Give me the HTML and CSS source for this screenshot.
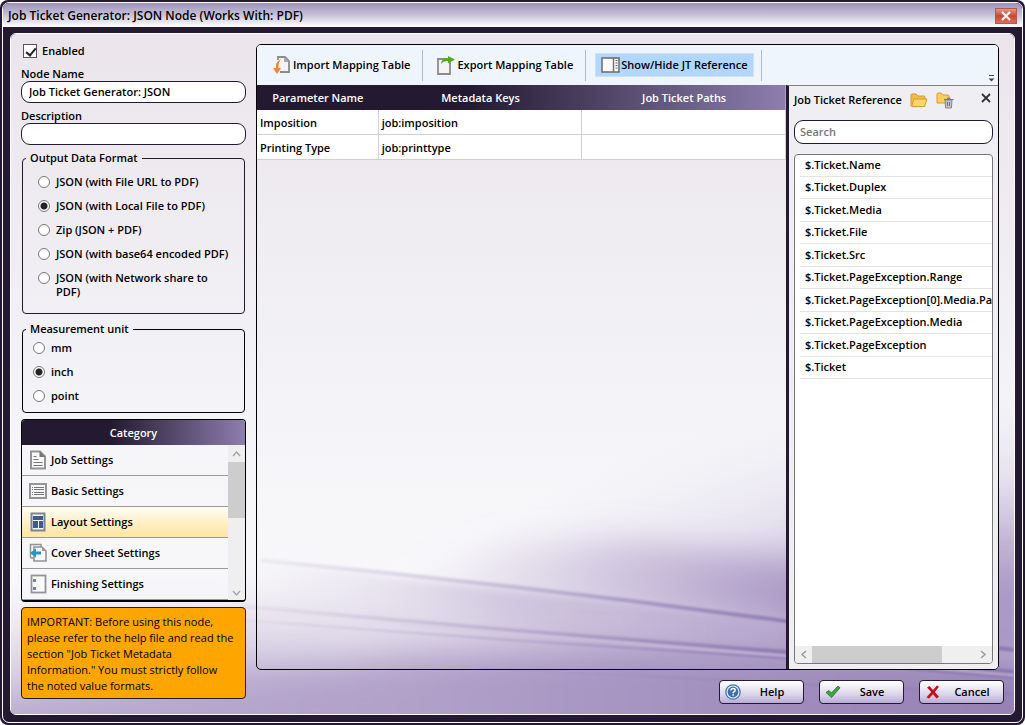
FILE: index.html
```html
<!DOCTYPE html>
<html lang="en">
<head>
<meta charset="utf-8">
<title>Job Ticket Generator: JSON Node (Works With: PDF)</title>
<link rel="stylesheet" href="styles.css">
</head>
<body>
<div class="window">
  <div class="frame">
    <header class="titlebar">
      <h1>Job Ticket Generator: JSON Node (Works With: PDF)</h1>
      <button class="close" type="button" aria-label="Close window"><svg width="10" height="10" viewBox="0 0 10 10"><path d="M1 1l8 8M9 1l-8 8" stroke="#fff" stroke-width="2.2"/></svg></button>
    </header>
    <form class="panel">
      <svg class="backdrop" viewBox="10 33 1004 681" preserveAspectRatio="none" aria-hidden="true">
        <defs>
          <linearGradient id="base" x1="0" y1="0" x2="0" y2="1"><stop offset="0" stop-color="#ebe5eb"/><stop offset=".3" stop-color="#efedf2"/><stop offset=".66" stop-color="#f6f6f9"/><stop offset=".8" stop-color="#f8f8fa"/><stop offset="1" stop-color="#ece8f2"/></linearGradient>
          <linearGradient id="low" gradientUnits="userSpaceOnUse" x1="10" y1="0" x2="1014" y2="0"><stop offset="0" stop-color="#b9abcf"/><stop offset=".4" stop-color="#b1a1c9"/><stop offset=".75" stop-color="#a08dbd"/><stop offset="1" stop-color="#9681b5"/></linearGradient>
          <linearGradient id="wedge" gradientUnits="userSpaceOnUse" x1="380" y1="0" x2="800" y2="0"><stop offset="0" stop-color="#cfc4de" stop-opacity="0"/><stop offset=".55" stop-color="#bfb0d3" stop-opacity=".6"/><stop offset="1" stop-color="#ab9ac5"/></linearGradient>
          <linearGradient id="mid" gradientUnits="userSpaceOnUse" x1="220" y1="0" x2="800" y2="0"><stop offset="0" stop-color="#e5e0ec" stop-opacity="0"/><stop offset=".5" stop-color="#cdc2dc" stop-opacity=".85"/><stop offset="1" stop-color="#b4a5cc"/></linearGradient>
          <linearGradient id="streak" gradientUnits="userSpaceOnUse" x1="250" y1="0" x2="800" y2="0"><stop offset="0" stop-color="#9f8fb9" stop-opacity=".1"/><stop offset=".5" stop-color="#9483b4" stop-opacity=".4"/><stop offset="1" stop-color="#8672ad" stop-opacity=".85"/></linearGradient>
          <radialGradient id="glow" gradientUnits="userSpaceOnUse" cx="0" cy="0" r="1" gradientTransform="translate(1060 620) scale(620 230)"><stop offset="0" stop-color="#9f8cbd"/><stop offset=".35" stop-color="#b3a3cb" stop-opacity=".8"/><stop offset=".65" stop-color="#cabfdc" stop-opacity=".35"/><stop offset="1" stop-color="#e5e0ec" stop-opacity="0"/></radialGradient>
          <radialGradient id="shade" gradientUnits="userSpaceOnUse" cx="0" cy="0" r="1" gradientTransform="translate(200 760) scale(500 190)"><stop offset="0" stop-color="#a998c5"/><stop offset=".45" stop-color="#b9abcf" stop-opacity=".75"/><stop offset="1" stop-color="#e5e0ec" stop-opacity="0"/></radialGradient>
          <filter id="b20" x="-20%" y="-60%" width="140%" height="220%"><feGaussianBlur stdDeviation="24 16"/></filter>
          <filter id="b4" x="-20%" y="-40%" width="140%" height="180%"><feGaussianBlur stdDeviation="4"/></filter>
          <filter id="b1" x="-20%" y="-40%" width="140%" height="180%"><feGaussianBlur stdDeviation="1.300"/></filter>
        </defs>
        <rect x="10" y="33" width="1004" height="681" fill="url(#base)"/>
        <rect x="10" y="33" width="1004" height="681" fill="url(#glow)"/>
        <path d="M380 600L500 546L620 538L786 560L1060 590V680L786 625Z" fill="url(#wedge)" filter="url(#b20)"/>
        <path d="M220 557L786 622L1060 652V740H220Z" fill="url(#mid)" filter="url(#b4)"/>
        <rect x="10" y="500" width="1004" height="214" fill="url(#shade)"/>
        <path d="M-80 712L120 700L256 680L420 656L600 650L786 658L1060 670V800H-80Z" fill="url(#low)" filter="url(#b20)"/>
        <g fill="none" stroke="url(#streak)" filter="url(#b1)">
          <path d="M260 560Q520 585 786 621L1014 650" stroke-width="4"/>
          <path d="M240 606L510 630L786 652L1014 672" stroke-width="4"/>
          <path d="M240 620L510 640L786 658L1014 678" stroke-width="2"/>
          <path d="M480 668L800 684L1014 694" stroke-width="2" stroke-opacity=".4"/>
        </g>
        <path d="M400 624L786 656L1014 675" fill="none" stroke="#d8cce3" stroke-width="2" stroke-opacity=".5" filter="url(#b1)"/>
      </svg>

      <div class="columns">
        <div class="sidebar">
          <label class="check"><input type="checkbox" checked><span>Enabled</span></label>
          <label class="field-label" for="node-name">Node Name</label>
          <input class="text" id="node-name" type="text" value="Job Ticket Generator: JSON">
          <label class="field-label" for="description">Description</label>
          <input class="text" id="description" type="text">

          <fieldset class="group formats">
            <legend>Output Data Format</legend>
            <label class="radio"><input type="radio" name="format"><span>JSON (with File URL to PDF)</span></label>
            <label class="radio"><input type="radio" name="format" checked><span>JSON (with Local File to PDF)</span></label>
            <label class="radio"><input type="radio" name="format"><span>Zip (JSON + PDF)</span></label>
            <label class="radio"><input type="radio" name="format"><span>JSON (with base64 encoded PDF)</span></label>
            <label class="radio"><input type="radio" name="format"><span>JSON (with Network share to PDF)</span></label>
          </fieldset>

          <fieldset class="group units">
            <legend>Measurement unit</legend>
            <label class="radio"><input type="radio" name="unit"><span>mm</span></label>
            <label class="radio"><input type="radio" name="unit" checked><span>inch</span></label>
            <label class="radio"><input type="radio" name="unit"><span>point</span></label>
          </fieldset>

          <section class="category">
            <h2>Category</h2>
            <div class="category-body">
              <div class="category-list">
                <button type="button"><svg width="18" height="20" viewBox="0 0 18 20"><path d="M2 1.500h9l5 5v12H2z" fill="#f6f6f6" stroke="#949494" stroke-width="2"/><path d="M10.500 1v6h6z" fill="#777"/><path d="M4.500 6.500h3M4.500 9.500h5M4.500 12.500h9M4.500 15.500h9" stroke="#777"/></svg>Job Settings</button>
                <button type="button"><svg width="18" height="20" viewBox="0 0 18 20"><rect x="1" y="3" width="16" height="14" fill="#f6f6f6" stroke="#949494" stroke-width="2"/><path d="M3 6.500h1M3 8.500h1M3 11.500h1M3 13.500h1M5 6.500h10M5 8.500h10M5 11.500h10M5 13.500h10" stroke="#777"/></svg>Basic Settings</button>
                <button type="button" class="selected"><svg width="18" height="20" viewBox="0 0 18 20"><rect x="2.500" y="1.500" width="13" height="17" fill="#f4f6fa" stroke="#7c8395" stroke-width="2"/><path d="M4 4h10v4H4zM4 9h5v7H4zM10 9h4v7h-4z" fill="#3f5a90"/></svg>Layout Settings</button>
                <button type="button"><svg width="18" height="20" viewBox="0 0 18 20"><path d="M1.500 15V1.500H12V4M1.500 15H5" fill="none" stroke="#949494" stroke-width="1.500"/><path d="M5 4h8l4 4v10H5z" fill="#f8f8f8" stroke="#949494" stroke-width="1.600"/><path d="M13 4v4h4" fill="#999"/><path d="M1 10l6-4.500v3h5v3H7v3z" fill="#2696cc"/></svg>Cover Sheet Settings</button>
                <button type="button"><svg width="18" height="20" viewBox="0 0 18 20"><rect x="2.500" y="1.500" width="14" height="17" fill="#fafafa" stroke="#949494" stroke-width="1.800"/><path d="M4 5h3v3H4zM4 13h3v3H4z" fill="#2b9ccd"/></svg>Finishing Settings</button>
              </div>
              <div class="vscroll" aria-hidden="true">
                <svg width="17" height="17" viewBox="0 0 17 17"><path d="M5 11l3.500-4 3.500 4" fill="none" stroke="#a3a3a3" stroke-width="1.300"/></svg>
                <div class="vthumb"></div>
                <svg width="17" height="17" viewBox="0 0 17 17"><path d="M5 8l3.500 4L12 8" fill="none" stroke="#a3a3a3" stroke-width="1.300"/></svg>
              </div>
            </div>
          </section>

          <p class="notice">IMPORTANT: Before using this node, please refer to the help file and read the section "Job Ticket Metadata Information." You must strictly follow the noted value formats.</p>
        </div>

        <div class="main">
          <div class="toolbar">
            <button type="button" class="tool"><svg width="18" height="20" viewBox="0 0 18 20"><path d="M5 5V2h7l4 4v11H7" fill="#f4f4f4" stroke="#8b8b8b" stroke-width="1.800"/><path d="M11 2v5h5" fill="#aaa"/><path d="M8 4Q2 7 3 13H0l4 6 4-6H5.500Q5 8 8 4z" fill="#f08437"/></svg>Import Mapping Table</button>
            <button type="button" class="tool"><svg width="19" height="20" viewBox="0 0 19 20"><path d="M2 4h9l3 3v12H2z" fill="#f4f4f4" stroke="#8b8b8b" stroke-width="1.800"/><path d="M5 9Q5 3.500 12 3V1l7 3.500-7 4V6Q7 6 5 9z" fill="#56aa18"/></svg>Export Mapping Table</button>
            <div class="tool-slot"><button type="button" class="tool pressed"><svg width="19" height="16" viewBox="0 0 19 16"><rect x="1" y="1" width="17" height="14" fill="#fafafa" stroke="#707070" stroke-width="1.600"/><path d="M12.500 1v14" stroke="#707070" stroke-width="1.400"/><path d="M15.500 3v10" stroke="#666" stroke-width="2" stroke-dasharray="1 1.500"/></svg>Show/Hide JT Reference</button></div>
            <svg class="overflow" width="9" height="9" viewBox="0 0 9 9" aria-hidden="true"><path d="M2 1.500h5" stroke="#444"/><path d="M1.500 4.500h6L4.500 7.500z" fill="#444"/></svg>
          </div>
          <div class="workspace">
            <div class="mapping">
              <table>
                <colgroup><col class="c1"><col class="c2"><col class="c3"></colgroup>
                <thead><tr><th>Parameter Name</th><th>Metadata Keys</th><th>Job Ticket Paths</th></tr></thead>
                <tbody>
                  <tr><td>Imposition</td><td>job:imposition</td><td></td></tr>
                  <tr><td>Printing Type</td><td>job:printtype</td><td></td></tr>
                </tbody>
              </table>
            </div>
            <aside class="reference">
              <div class="ref-head">
                <h2>Job Ticket Reference</h2>
                <button type="button" class="icon" aria-label="Open folder"><svg width="18" height="15" viewBox="0 0 18 15"><path d="M1 13V2q0-1 1-1h4l2 2h6q1 0 1 1v3" fill="#f2bd45" stroke="#d69a35"/><path d="M1.500 13.500L4 6h13l-2.500 7.500z" fill="#fbd66c" stroke="#d69a35"/></svg></button>
                <button type="button" class="icon" aria-label="Delete folder"><svg width="18" height="17" viewBox="0 0 18 17"><path d="M1 11V2q0-1 1-1h3l2 2h5q1 0 1 1v7z" fill="#fbce5c" stroke="#d69a35"/><path d="M9 8h7l-.6 8H9.600z" fill="#c3c6c9" stroke="#85898d"/><path d="M8 7.500h9.500M11 6.300h3.500M11.500 10v4M13.500 10v4" stroke="#777c80" stroke-width="1.200"/></svg></button>
                <button type="button" class="icon dismiss" aria-label="Close reference"><svg width="10" height="10" viewBox="0 0 10 10"><path d="M1 1l8 8M9 1L1 9" stroke="#333" stroke-width="1.800"/></svg></button>
              </div>
              <input class="text search" type="search" placeholder="Search" aria-label="Search">
              <div class="tree">
                <ul>
                  <li>$.Ticket.Name</li>
                  <li>$.Ticket.Duplex</li>
                  <li>$.Ticket.Media</li>
                  <li>$.Ticket.File</li>
                  <li>$.Ticket.Src</li>
                  <li>$.Ticket.PageException.Range</li>
                  <li>$.Ticket.PageException[0].Media.Paper</li>
                  <li>$.Ticket.PageException.Media</li>
                  <li>$.Ticket.PageException</li>
                  <li>$.Ticket</li>
                </ul>
                <div class="hscroll" aria-hidden="true">
                  <svg width="17" height="17" viewBox="0 0 17 17"><path d="M11 5L7 8.500 11 12" fill="none" stroke="#9a9a9a" stroke-width="1.500"/></svg>
                  <div class="htrack"><div class="hthumb"></div></div>
                  <svg width="17" height="17" viewBox="0 0 17 17"><path d="M6 5l4 3.500L6 12" fill="none" stroke="#9a9a9a" stroke-width="1.500"/></svg>
                </div>
              </div>
            </aside>
          </div>
        </div>
      </div>

      <footer class="actions">
        <button type="button"><svg width="16" height="16" viewBox="0 0 16 16"><circle cx="8" cy="8" r="7.200" fill="#e9f0fa" stroke="#4a72ad" stroke-width="1.300"/><circle cx="8" cy="8" r="5.400" fill="#3e6db0"/><path d="M5.900 6.500Q6 4.500 8.100 4.500T10.100 6.200Q10.100 7.200 8.900 7.900Q8.100 8.400 8.100 9.200M8.100 10.300v1.500" fill="none" stroke="#fff" stroke-width="1.500"/></svg><span>Help</span></button>
        <button type="button"><svg width="16" height="16" viewBox="0 0 16 16"><path d="M1 8.500L4 6.500 6.500 9 13 2l2 1.800L6.500 13.500z" fill="#43a243" stroke="#1f6f24" stroke-width=".8"/></svg><span>Save</span></button>
        <button type="button"><svg width="16" height="16" viewBox="0 0 16 16"><path d="M2 3.500L4.500 2 8 6l4-4.500 2 1.300L9.800 8l4.200 4.700-2.500 1.800L8 10.300 4 14.500l-2.500-1.300L6.200 8z" fill="#c4101a"/></svg><span>Cancel</span></button>
      </footer>
    </form>
  </div>
</div>
</body>
</html>
```
FILE: styles.css
```css
* { box-sizing: border-box; }
html, body { height: 100%; margin: 0; }
body { background: #fff; font: 600 11px/14px "Open Sans", "Noto Sans", sans-serif; color: #000; }
h1, h2, p, ul { margin: 0; padding: 0; font: inherit; }
ul { list-style: none; }
button, input { font: inherit; color: inherit; }
button { padding: 0; border: 0; background: none; }
svg { display: block; flex: none; }

.window { height: 100vh; padding: 2px; background: #231a31; border-radius: 8px; }
.frame { height: 100%; display: flex; flex-direction: column; padding: 0 7px 7px; border: 1px solid #fff; border-radius: 7px; overflow: hidden; background: #231a31; }
.titlebar { display: flex; align-items: center; justify-content: space-between; height: 24px; margin: 0 -7px 6px; padding: 2px 5px 0; background: linear-gradient(#9b91b9, #c8c2d9 50%, #fff); flex: none; }
.titlebar h1 { font-size: 12px; }
.close { width: 22px; height: 16px; display: flex; align-items: center; justify-content: center; border: 1px solid #b35a4d; background: linear-gradient(#e29a88, #cb452d 50%, #d8705a); }

.panel { position: relative; z-index: 0; flex: 1; min-height: 0; display: flex; flex-direction: column; margin: 0; border: 1px solid #fff; border-radius: 6px; overflow: hidden; }
.backdrop { position: absolute; inset: 0; width: 100%; height: 100%; z-index: -1; }
.columns { flex: 1; min-height: 0; display: flex; gap: 10px; padding: 10px 15px 0 10px; }

.sidebar { width: 225px; flex: none; display: flex; flex-direction: column; }
.check { display: flex; align-items: center; gap: 5px; padding-left: 2px; margin-bottom: 9px; }
.check input { appearance: none; width: 14px; height: 14px; margin: 0; border: 1px solid #555; background: #fff; position: relative; }
.check input:checked::after { content: ""; position: absolute; left: 4px; top: 1px; width: 4px; height: 8px; border: solid #222; border-width: 0 2px 2px 0; transform: rotate(40deg); }
.field-label { height: 14px; flex: none; }
.text { width: 100%; height: 22px; flex: none; margin: 0 0 6px; padding: 0 7px 2px; border: 1px solid #231a31; border-radius: 9px; background: #fff; outline: 0; }
.group { flex: none; margin: 0 1px; border: 1px solid #231a31; border-radius: 4px; min-width: 0; }
.group legend { height: 14px; padding: 0 4px; margin-left: 3px; }
.formats { height: 163px; padding: 10px 10px 0 0; }
.formats .radio { margin-left: 15px; }
.units { height: 91px; padding: 5px 10px 0 0; margin-top: 8px; border-color: #000; }
.units .radio { margin-left: 10px; }
.radio { display: flex; align-items: flex-start; gap: 6px; margin-bottom: 10px; }
.radio input { appearance: none; width: 12px; height: 12px; margin: 1px 0 0; border: 1px solid #777; border-radius: 50%; background: #fff; flex: none; }
.radio input:checked { background: radial-gradient(circle, #222 0 3px, #fff 4px); }

.category { flex: none; margin-top: 6px; border: 1px solid #000; border-bottom-width: 2px; border-radius: 4px; overflow: hidden; }
.category h2 { height: 25px; line-height: 26px; text-align: center; color: #fff; background: linear-gradient(90deg, #231a31 40%, #8d7eae); }
.category-body { display: flex; }
.category-list { flex: 1; min-width: 0; }
.category-list button { width: 100%; height: 31px; display: flex; align-items: center; gap: 4px; padding-left: 7px; border-bottom: 1px solid #999; background: rgba(247, 247, 249, .7); text-align: left; }
.category-list .selected { background: linear-gradient(#fffdf5, #ffe7a9 85%); }
.vscroll { width: 17px; background: #efefef; display: flex; flex-direction: column; }
.vscroll svg:last-child { margin-top: auto; }
.vthumb { height: 56px; background: #cdcdcd; }
.notice { flex: none; margin-top: 5px; padding: 6px 10px 4px 5px; border: 1px solid #231a31; border-radius: 4px; background: #ffa500; font: 400 11px/16px "Open Sans", "Noto Sans", sans-serif; }

.main { flex: 1; min-width: 0; display: flex; flex-direction: column; border: 1px solid #000; border-radius: 5px; overflow: hidden; }
.toolbar { height: 40px; flex: none; display: flex; align-items: center; padding-left: 16px; background: #eef5fd; position: relative; }
.tool { display: flex; align-items: center; gap: 2px; height: 31px; border-right: 1px solid #b4b9c2; padding-right: 12px; margin-right: 13px; }
.tool-slot { height: 31px; display: flex; align-items: center; border-right: 1px solid #b4b9c2; padding-right: 7px; margin-left: -4px; }
.tool.pressed { height: 24px; margin: 0; padding: 0 5px; gap: 1px; border: 1px solid #d2e1ee; background: #b1d7fe; }
.overflow { position: absolute; right: 2px; bottom: 2px; }
.workspace { flex: 1; min-height: 0; display: flex; }
.mapping { flex: 1; min-width: 0; }
.mapping table { width: 100%; table-layout: fixed; border-collapse: separate; border-spacing: 0; }
.c1 { width: 23%; }
.mapping thead { background: linear-gradient(90deg, #231a31 40%, #8d7eae); }
.mapping th { height: 25px; padding: 0; color: #fff; font-weight: 600; text-align: center; }
.mapping td { height: 25px; padding: 2px 3px 0; background: #fff; border: solid #d0d0d0; border-width: 0 1px 1px 0; }
.reference { width: 212px; flex: none; display: flex; flex-direction: column; padding: 0 5px 5px; border-left: 3px solid #231a31; border-top: 1px solid #808080; background: #efeef2; }
.ref-head { display: flex; align-items: center; height: 28px; gap: 8px; }
.icon { display: block; }
.dismiss { margin: 0 2px 4px auto; }
.search { height: 24px; margin: 6px 0 10px; padding: 0 5px 2px; }
.search::placeholder { color: #777; opacity: 1; }
.tree { flex: 1; min-height: 0; display: flex; flex-direction: column; border: 1px solid #777; border-radius: 4px; background: #fff; overflow: hidden; }
.tree ul { flex: 1; padding-left: 5px; overflow: hidden; }
.tree li { height: 22px; padding: 2px 5px; line-height: 15px; border-bottom: 1px solid #e3e3e3; white-space: nowrap; }
.tree li:nth-child(2n+3) { height: 23px; padding-top: 3px; }
.hscroll { height: 17px; display: flex; background: #efefef; }
.htrack { flex: 1; }
.hthumb { width: 80%; height: 100%; background: #cdcdcd; }

.actions { display: flex; justify-content: flex-end; gap: 15px; padding: 10px 10px 10px 0; }
.actions button { width: 85px; height: 24px; display: flex; align-items: center; padding-left: 5px; border: 1px solid #231a31; border-radius: 4px; background: linear-gradient(#fff, #dcd6ea 60%, #b8acd5); }
.actions span { flex: 1; text-align: center; }
```
